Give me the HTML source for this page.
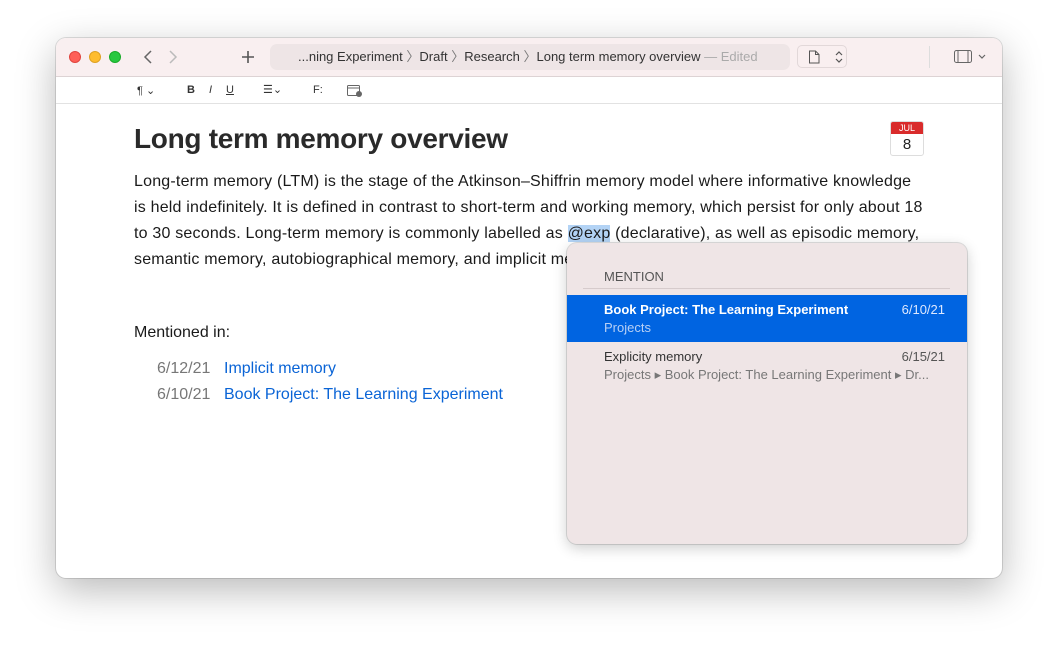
<!DOCTYPE html>
<html><head><meta charset="utf-8"><style>
*{margin:0;padding:0;box-sizing:border-box}
body{width:1058px;height:653px;background:#fff;font-family:"Liberation Sans",sans-serif;position:relative;overflow:hidden}
.win{position:absolute;left:56px;top:38px;width:946px;height:540px;border-radius:10px;background:#fff;box-shadow:0 12px 40px rgba(0,0,0,.28),0 0 0 1px rgba(0,0,0,.12);overflow:hidden}
.tb{position:absolute;left:0;top:0;width:100%;height:39px;background:#f9eff0;border-bottom:1px solid #ddd3d4}
.dot{position:absolute;top:13px;width:12px;height:12px;border-radius:50%}
.fmt{position:absolute;left:0;top:39px;width:100%;height:27px;border-bottom:1px solid #e2e2e2;font-size:11px;color:#333}
.a{position:absolute}
.crumb{position:absolute;left:214px;top:6px;width:520px;height:26px;border-radius:7px;background:#eee5e6;font-size:13px;color:#333;line-height:26px;padding-left:28px;white-space:nowrap}
.body{position:absolute;left:78px;top:131px;width:800px;font-size:16px;line-height:26px;color:#1a1a1a;letter-spacing:.2px}
h1{position:absolute;left:78px;top:85px;font-size:28px;font-weight:600;color:#2a2a2a;letter-spacing:-.3px}
.pop{position:absolute;left:567px;top:243px;width:400px;height:301px;background:#efe5e6;border-radius:10px;box-shadow:0 4px 14px rgba(0,0,0,.2),0 0 0 1px rgba(0,0,0,.12);font-size:13px}
.row{position:absolute;left:0;width:400px;height:47px}
.row .t{position:absolute;left:37px;top:7px}
.row .d{position:absolute;right:22px;top:7px}
.row .s{position:absolute;left:37px;top:25px}
</style></head><body>
<div class="win">
 <div class="tb">
  <div class="dot" style="left:13px;background:#fe5f57;border:1px solid #e0443e"></div>
  <div class="dot" style="left:33px;background:#febc2e;border:1px solid #dea123"></div>
  <div class="dot" style="left:53px;background:#28c840;border:1px solid #1aab29"></div>
  <svg class="a" style="left:86px;top:12px" width="40" height="14"><path d="M9 1L3 7l6 6" stroke="#666" stroke-width="1.5" fill="none"/><path d="M28 1l6 6-6 6" stroke="#bbb" stroke-width="1.5" fill="none"/></svg>
  <svg class="a" style="left:185px;top:12px" width="14" height="14"><path d="M7 1v12M1 7h12" stroke="#555" stroke-width="1.6"/></svg>
  <div class="crumb">...ning Experiment <span style="color:#777">〉</span>Draft <span style="color:#777">〉</span>Research <span style="color:#777">〉</span>Long term memory overview <span style="color:#aaa">— Edited</span></div>
  <div class="a" style="left:741px;top:7px;width:50px;height:23px;border:1px solid #e2d8d9;border-radius:5px"></div>
  <svg class="a" style="left:752px;top:12px" width="40" height="14"><path d="M1.5 1h6l3.5 3.5V13h-9.5z M7.5 1v3.5H11" stroke="#555" fill="none"/><path d="M28 5l3-3 3 3M28 9l3 3 3-3" stroke="#555" fill="none" stroke-width="1.2"/></svg>
  <div class="a" style="left:873px;top:8px;width:1px;height:22px;background:#ddd"></div>
  <svg class="a" style="left:898px;top:12px" width="36" height="14"><rect x=".5" y=".5" width="17" height="12" rx="2" stroke="#666" fill="none"/><path d="M4 1v11M14 1v11" stroke="#666"/><path d="M25 5l3 3 3-3" stroke="#666" fill="none" stroke-width="1.2"/></svg>
 </div>
 <div class="fmt">
  <span class="a" style="left:81px;top:7px">¶ ⌄</span>
  <span class="a" style="left:131px;top:7px;font-weight:bold">B</span>
  <span class="a" style="left:153px;top:7px;font-style:italic">I</span>
  <span class="a" style="left:170px;top:7px;text-decoration:underline">U</span>
  <span class="a" style="left:207px;top:6px">☰⌄</span>
  <span class="a" style="left:257px;top:7px">F:</span>
  <svg class="a" style="left:291px;top:7px" width="16" height="14"><rect x=".5" y="1.5" width="12" height="10" rx="1" stroke="#666" fill="none"/><path d="M1 4h11" stroke="#666"/><circle cx="12" cy="10" r="3" fill="#666"/></svg>
 </div>
 <h1>Long term memory overview</h1>
 <div class="a" style="left:834px;top:83px;width:34px;height:35px;border-radius:3px;border:1px solid #ddd;overflow:hidden">
  <div style="height:12px;background:#d92b2b;color:#fff;font-size:9px;text-align:center;line-height:12px">JUL</div>
  <div style="text-align:center;font-size:15px;line-height:21px;color:#222">8</div>
 </div>
 <div class="body">Long-term memory (LTM) is the stage of the Atkinson–Shiffrin memory model where informative knowledge<br>is held indefinitely. It is defined in contrast to short-term and working memory, which persist for only about 18<br>to 30 seconds. Long-term memory is commonly labelled as <span style="background:#b3d3f5">@exp</span> (declarative), as well as episodic memory,<br>semantic memory, autobiographical memory, and implicit memory.</div>
 <div class="a" style="left:78px;top:286px;font-size:16px;color:#1a1a1a">Mentioned in:</div>
 <div class="a" style="left:101px;top:318px;font-size:16px;color:#777;line-height:26px">6/12/21<br>6/10/21</div>
 <div class="a" style="left:168px;top:318px;font-size:16px;color:#0a64d6;line-height:26px">Implicit memory<br>Book Project: The Learning Experiment</div>
</div>
<div class="pop">
 <div class="a" style="left:37px;top:26px;color:#555;font-size:13px">MENTION</div>
 <div class="a" style="left:16px;top:45px;width:367px;height:1px;background:#d6cbcc"></div>
 <div class="row" style="top:52px;background:#0064e1;color:#fff"><span class="t" style="font-weight:600">Book Project: The Learning Experiment</span><span class="d" style="color:#dde8ff">6/10/21</span><span class="s" style="color:#b8d0f5">Projects</span></div>
 <div class="row" style="top:99px;color:#333"><span class="t">Explicity memory</span><span class="d" style="color:#555">6/15/21</span><span class="s" style="color:#777">Projects ▸ Book Project: The Learning Experiment ▸ Dr...</span></div>
</div>
</body></html>
